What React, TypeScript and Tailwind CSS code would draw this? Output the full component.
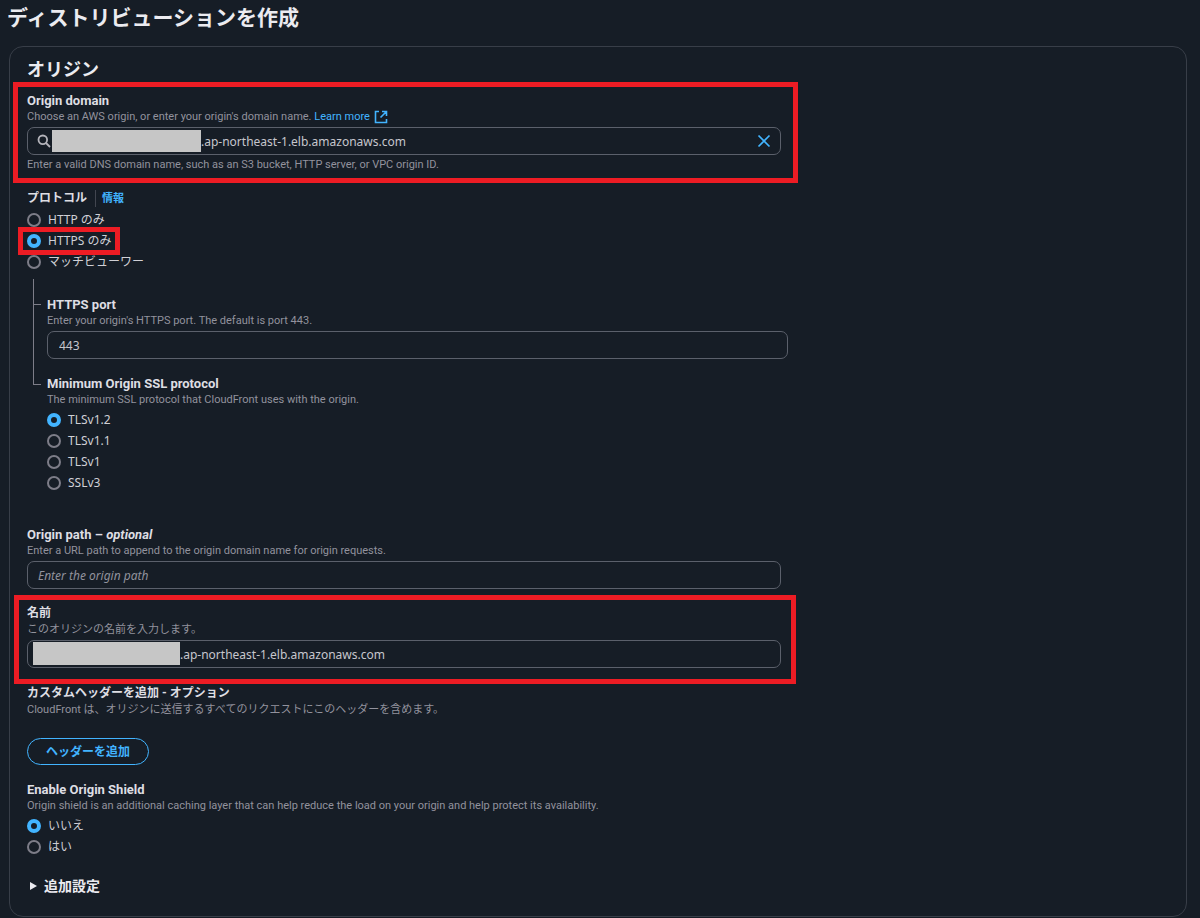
import { useState, type ReactNode } from "react";

function Highlight({ className }: { className: string }) {
  return (
    <span
      aria-hidden="true"
      className={`pointer-events-none absolute border-[5px] border-[#ed1c24] ${className}`}
    />
  );
}

function Label({ id, htmlFor, small, children }: {
  id?: string;
  htmlFor?: string;
  small?: boolean;
  children: ReactNode;
}) {
  const style = `block font-bold text-[#dedee3] ${small ? "text-[12px] leading-[17px]" : "text-[13px] leading-4"}`;
  return htmlFor ? (
    <label id={id} htmlFor={htmlFor} className={style}>
      {children}
    </label>
  ) : (
    <h3 id={id} className={style}>
      {children}
    </h3>
  );
}

function Hint({ children }: { children: ReactNode }) {
  return <p className="text-[11px] leading-[15px] whitespace-nowrap text-[#92929d]">{children}</p>;
}

function Box({ children }: { children: ReactNode }) {
  return (
    <div className="mt-[3px] flex h-7 w-full items-center rounded-[7px] border border-[#5b606b] focus-within:border-[#42b4ff]">
      {children}
    </div>
  );
}

function Radios({ name, labelledBy, options, initial }: {
  name: string;
  labelledBy: string;
  options: string[];
  initial: string;
}) {
  return (
    <div role="radiogroup" aria-labelledby={labelledBy} className="mt-[2px] flex flex-col items-start">
      {options.map((option) => (
        <label
          key={option}
          className="relative flex h-[21px] items-center gap-[7px] font-['Noto_Sans','Noto_Sans_CJK_JP',sans-serif] text-[12px] leading-4 text-[#d0d0d6]"
        >
          <input
            type="radio"
            name={name}
            value={option}
            defaultChecked={option === initial}
            className="size-[14px] appearance-none rounded-full border-2 border-[#7d7d88] checked:border-4 checked:border-[#42b4ff]"
          />
          {option}
          {option === "HTTPS のみ" && <Highlight className="-inset-x-[9px] -top-[3px] -bottom-[4px]" />}
        </label>
      ))}
    </div>
  );
}

const field =
  "h-full min-w-0 flex-1 bg-transparent font-['Noto_Sans','Noto_Sans_CJK_JP',sans-serif] text-[12px] text-[#c6c6cd] outline-none";

export default function App() {
  const [domain, setDomain] = useState(".ap-northeast-1.elb.amazonaws.com");
  const [open, setOpen] = useState(false);

  return (
    <main
      lang="ja"
      className="min-h-screen bg-[#161d26] pr-[13px] pb-px pl-[9px] font-['Roboto','Noto_Sans_CJK_JP',sans-serif] text-[#dedee3]"
    >
      <h1 className="-ml-[2px] flex h-[46px] items-start pt-1 text-[21px] leading-7 font-bold text-[#ebebf0]">
        ディストリビューションを作成
      </h1>

      <section className="rounded-[14px] border border-[#383e48] px-[17px] pt-[11px] pb-5">
        <h2 className="text-[18px] leading-6 font-bold text-[#ebebf0]">オリジン</h2>

        <div className="relative mt-[11px] w-[66%]">
          <Highlight className="-top-[11px] -right-[17px] -bottom-[11px] -left-[14px]" />
          <Label htmlFor="domain">Origin domain</Label>
          <Hint>
            Choose an AWS origin, or enter your origin's domain name.{" "}
            <a href="#learn-more" className="inline-flex items-center gap-1 text-[#42b4ff]">
              Learn more
              <svg viewBox="0 0 14 14" className="size-[14px]" fill="none" stroke="currentColor" strokeWidth="1.6">
                <path d="M5 1.5H1.5v11h11V9M8 1.5h4.5V6M12.5 1.5 6.5 7.5" />
              </svg>
            </a>
          </Hint>
          <Box>
            <svg viewBox="0 0 14 14" className="ml-[9px] size-[14px] shrink-0" fill="none" stroke="#b4b4bb" strokeWidth="1.8">
              <circle cx="5.8" cy="5.8" r="4.3" />
              <path d="m9 9 4 4" />
            </svg>
            <span className="ml-px h-[22px] w-[149px] shrink-0 bg-[#c6c6c6]" />
            <input id="domain" value={domain} onChange={(e) => setDomain(e.target.value)} className={field} />
            <button type="button" aria-label="Clear" onClick={() => setDomain("")} className="mr-[9px] text-[#42b4ff]">
              <svg viewBox="0 0 14 14" className="size-[14px]" fill="none" stroke="currentColor" strokeWidth="1.7">
                <path d="m1.5 1.5 11 11M12.5 1.5l-11 11" />
              </svg>
            </button>
          </Box>
          <div className="mt-[2px]">
            <Hint>Enter a valid DNS domain name, such as an S3 bucket, HTTP server, or VPC origin ID.</Hint>
          </div>
        </div>

        <div className="mt-[18px]">
          <div className="flex items-center">
            <Label id="protocol" small>
              プロトコル
            </Label>
            <a href="#info" className="ml-2 border-l border-[#424650] pl-[6px] text-[11px] leading-[17px] font-bold text-[#42b4ff]">
              情報
            </a>
          </div>
          <Radios
            name="protocol"
            labelledBy="protocol"
            options={["HTTP のみ", "HTTPS のみ", "マッチビューワー"]}
            initial="HTTPS のみ"
          />
        </div>

        <div className="mt-[7px] flex gap-[6px] pl-[6px]">
          <div aria-hidden="true" className="w-2 shrink-0">
            <div className="h-[26px] border-b border-l border-[#7d7d88]" />
            <div className="h-20 border-b border-l border-[#7d7d88]" />
          </div>
          <div className="min-w-0 flex-1 pt-[18px]">
            <div className="w-[66%]">
              <Label htmlFor="port">HTTPS port</Label>
              <Hint>Enter your origin's HTTPS port. The default is port 443.</Hint>
              <Box>
                <input id="port" defaultValue="443" inputMode="numeric" className={`${field} px-[11px]`} />
              </Box>
            </div>
            <div className="mt-[17px]">
              <Label id="ssl">Minimum Origin SSL protocol</Label>
              <Hint>The minimum SSL protocol that CloudFront uses with the origin.</Hint>
              <Radios
                name="ssl"
                labelledBy="ssl"
                options={["TLSv1.2", "TLSv1.1", "TLSv1", "SSLv3"]}
                initial="TLSv1.2"
              />
            </div>
          </div>
        </div>

        <div className="mt-[34px] w-[66%]">
          <Label htmlFor="path">
            Origin path – <em>optional</em>
          </Label>
          <Hint>Enter a URL path to append to the origin domain name for origin requests.</Hint>
          <Box>
            <input
              id="path"
              placeholder="Enter the origin path"
              className={`${field} px-[10px] placeholder:text-[#92929d] placeholder:italic`}
            />
          </Box>
        </div>

        <div className="relative mt-4 w-[66%]">
          <Highlight className="-top-[10px] -right-[15px] -bottom-[16px] -left-[13px]" />
          <Label htmlFor="name" small>
            名前
          </Label>
          <Hint>このオリジンの名前を入力します。</Hint>
          <Box>
            <span className="mb-[2px] ml-[5px] h-[23px] w-[147px] shrink-0 bg-[#c6c6c6]" />
            <input id="name" defaultValue=".ap-northeast-1.elb.amazonaws.com" className={field} />
          </Box>
        </div>

        <div className="mt-[17px]">
          <Label small>カスタムヘッダーを追加 - オプション</Label>
          <Hint>CloudFront は、オリジンに送信するすべてのリクエストにこのヘッダーを含めます。</Hint>
          <button
            type="button"
            className="mt-[21px] block h-[27px] rounded-full border border-[#42b4ff] px-[18px] text-[12px] leading-4 font-bold text-[#42b4ff]"
          >
            ヘッダーを追加
          </button>
        </div>

        <div className="mt-[17px]">
          <Label id="shield">Enable Origin Shield</Label>
          <Hint>
            Origin shield is an additional caching layer that can help reduce the load on your origin and help protect its
            availability.
          </Hint>
          <Radios name="shield" labelledBy="shield" options={["いいえ", "はい"]} initial="いいえ" />
        </div>

        <button
          type="button"
          aria-expanded={open}
          onClick={() => setOpen(!open)}
          className="mt-[19px] flex items-center gap-[7px] pl-[3px] text-[14px] leading-5 font-bold text-[#ebebf0]"
        >
          <svg viewBox="0 0 8 10" className="h-[10px] w-[7px]" fill="currentColor">
            <path d="M0 0.5 8 5 0 9.5z" />
          </svg>
          追加設定
        </button>
      </section>
    </main>
  );
}
